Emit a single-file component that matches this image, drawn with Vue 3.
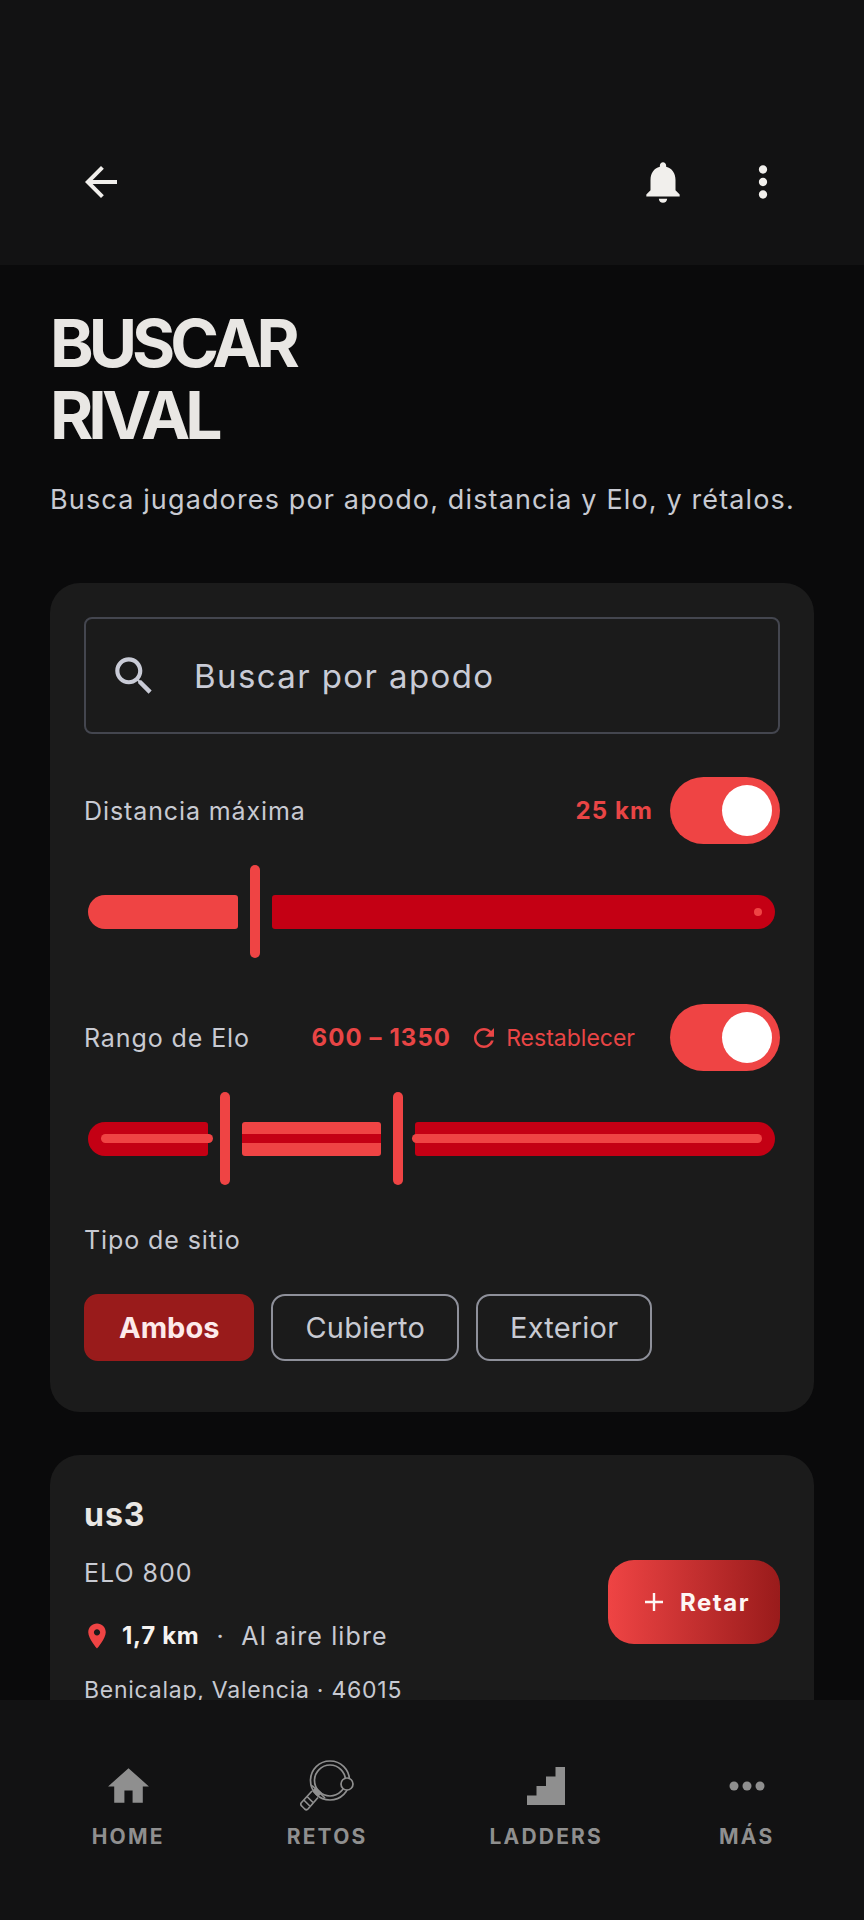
<template>
  <div class="page">
    <header class="topbar">
      <svg class="icon-back" viewBox="0 0 24 24"><path d="M20 11H7.83l5.59-5.59L12 4l-8 8 8 8 1.41-1.41L7.83 13H20v-2z" /></svg>
      <svg class="icon-bell" viewBox="0 0 24 24"><path d="M12 22c1.1 0 2-.9 2-2h-4c0 1.1.89 2 2 2zm6-6v-5c0-3.07-1.64-5.64-4.5-6.32V4c0-.83-.67-1.5-1.5-1.5s-1.5.67-1.5 1.5v.68C7.63 5.36 6 7.92 6 11v5l-2 2v1h16v-1l-2-2z" /></svg>
      <svg class="icon-more" viewBox="0 0 24 24"><path d="M12 8c1.1 0 2-.9 2-2s-.9-2-2-2-2 .9-2 2 .9 2 2 2zm0 2c-1.1 0-2 .9-2 2s.9 2 2 2 2-.9 2-2-.9-2-2-2zm0 6c-1.1 0-2 .9-2 2s.9 2 2 2 2-.9 2-2-.9-2-2-2z" /></svg>
    </header>

    <main class="content">
      <h1 class="title">BUSCAR<br />RIVAL</h1>
      <p class="subtitle">Busca jugadores por apodo, distancia y Elo, y rétalos.</p>

      <section class="card filters">
        <div class="search">
          <svg class="icon-search" viewBox="0 0 24 24"><path d="M15.5 14h-.79l-.28-.27C15.41 12.59 16 11.11 16 9.5 16 5.91 13.09 3 9.5 3S3 5.91 3 9.5 5.91 16 9.5 16c1.61 0 3.09-.59 4.23-1.57l.27.28v.79l5 4.99L20.49 19l-4.99-5zm-6 0C7.01 14 5 11.99 5 9.5S7.01 5 9.5 5 14 7.01 14 9.5 11.99 14 9.5 14z" /></svg>
          <span>Buscar por apodo</span>
        </div>

        <div class="filter-row first">
          <span class="label">Distancia máxima</span>
          <span class="value km">25 km</span>
          <div class="toggle"><div class="thumb"></div></div>
        </div>
        <div class="slider">
          <div class="seg on start" style="width: 150px"></div>
          <div class="handle"></div>
          <div class="seg off end grow"><span class="stop"></span></div>
        </div>

        <div class="filter-row">
          <span class="label">Rango de Elo</span>
          <span class="value elo">600 – 1350</span>
          <svg class="icon-refresh" viewBox="0 0 24 24"><path d="M17.65 6.35C16.2 4.9 14.21 4 12 4c-4.42 0-7.99 3.58-7.99 8s3.57 8 7.99 8c3.73 0 6.84-2.55 7.73-6h-2.08c-.82 2.33-3.04 4-5.65 4-3.31 0-6-2.69-6-6s2.69-6 6-6c1.66 0 3.14.69 4.22 1.78L13 11h7V4l-2.35 2.35z" /></svg>
          <span class="reset">Restablecer</span>
          <div class="toggle"><div class="thumb"></div></div>
        </div>
        <div class="slider">
          <div class="seg off start" style="width: 120px"><span class="line line-left"></span></div>
          <div class="handle"></div>
          <div class="seg on" style="width: 139px"><span class="line line-mid"></span></div>
          <div class="handle"></div>
          <div class="seg off end grow"><span class="line line-right"></span></div>
        </div>

        <div class="label site-label">Tipo de sitio</div>
        <div class="chips">
          <div v-for="chip in chips" :key="chip.name" :class="['chip', { active: chip.active }]">{{ chip.name }}</div>
        </div>
      </section>

      <section class="card player">
        <div class="player-info">
          <div class="player-name">us3</div>
          <div class="player-elo">ELO 800</div>
          <div class="player-place">
            <svg class="icon-pin" viewBox="0 0 24 24"><path d="M12 2C8.13 2 5 5.13 5 9c0 5.25 7 13 7 13s7-7.75 7-13c0-3.87-3.13-7-7-7zm0 9.5c-1.38 0-2.5-1.12-2.5-2.5s1.12-2.5 2.5-2.5 2.5 1.12 2.5 2.5-1.12 2.5-2.5 2.5z" /></svg>
            <strong>1,7 km</strong>
            <span class="dot">·</span>
            <span class="place-type">Al aire libre</span>
          </div>
          <div class="player-addr">Benicalap, Valencia · 46015</div>
        </div>
        <div class="challenge">
          <svg class="icon-plus" viewBox="0 0 20 20"><path d="M10 1v18M1 10h18" /></svg>
          <span>Retar</span>
        </div>
      </section>
    </main>

    <nav class="bottom-nav">
      <div class="nav-item">
        <div class="nav-icon">
          <svg width="49" height="49" viewBox="0 0 24 24"><path d="M10 20v-6h4v6h5v-8h3L12 3 2 12h3v8z" fill="#8f8f8f" /></svg>
        </div>
        <span>HOME</span>
      </div>
      <div class="nav-item">
        <div class="nav-icon">
          <svg width="54" height="52" viewBox="0 0 54 52" fill="none" stroke="#8f8f8f" stroke-width="1.7">
            <circle cx="30" cy="20.5" r="19.5" />
            <circle cx="30" cy="20.5" r="15.5" />
            <path d="M12 25.5L25 38" />
            <path d="M12 31l6 6 4-4-6-6z" fill="#8f8f8f" stroke="none" />
            <path d="M12 31L1.5 42.5a2.5 2.5 0 0 0 0.2 3.5l3 3a2.5 2.5 0 0 0 3.5 -0.2L18 37.5" />
            <path d="M7 36.5l6 6M3.8 40l6 6" />
            <circle cx="47" cy="24" r="6" fill="#121212" />
          </svg>
        </div>
        <span>RETOS</span>
      </div>
      <div class="nav-item">
        <div class="nav-icon">
          <svg width="38" height="38" viewBox="0 0 38 38"><path d="M0 38V28.5H9.5V19H19V9.5H28.5V0H38V38Z" fill="#8f8f8f" /></svg>
        </div>
        <span>LADDERS</span>
      </div>
      <div class="nav-item last">
        <div class="nav-icon">
          <svg width="36" height="10" viewBox="0 0 36 10" fill="#8f8f8f">
            <circle cx="5" cy="5" r="4.5" />
            <circle cx="18" cy="5" r="4.5" />
            <circle cx="31" cy="5" r="4.5" />
          </svg>
        </div>
        <span>MÁS</span>
      </div>
    </nav>
  </div>
</template>

<script setup>
const chips = [
  { name: 'Ambos', active: true },
  { name: 'Cubierto', active: false },
  { name: 'Exterior', active: false }
];
</script>

<style>
html,
body {
  margin: 0;
  background: #0a0a0a;
}
</style>

<style scoped>
.page {
  display: flex;
  flex-direction: column;
  height: 1920px;
  overflow: hidden;
  background: #0a0a0b;
  font-family: Inter, "Liberation Sans", sans-serif;
  color: #c8cad2;
}

/* barra superior */
.topbar {
  display: flex;
  align-items: center;
  flex-shrink: 0;
  box-sizing: border-box;
  height: 265px;
  padding: 157px 76px 58px 77px;
  background: #121213;
  fill: #f1efec;
}

.icon-back {
  width: 48px;
  height: 48px;
  margin-right: auto;
}

.icon-bell {
  width: 50px;
  height: 50px;
  margin-right: 50px;
}

.icon-more {
  width: 50px;
  height: 50px;
}

.content {
  flex: 1;
  min-height: 0;
  overflow: hidden;
  padding: 0 50px;
}

.title {
  margin: 42px 0 0;
  font-size: 66px;
  line-height: 72px;
  font-weight: 700;
  letter-spacing: -5px;
  color: #e9e7e4;
}

.subtitle {
  margin: 31px 0 0;
  font-size: 27px;
  line-height: 36px;
  letter-spacing: 1.14px;
  white-space: nowrap;
}

.card {
  box-sizing: border-box;
  width: 764px;
  background: #1b1b1b;
  border-radius: 30px;
}

.filters {
  margin-top: 65px;
  padding: 34px 34px 51px 34px;
}

.search {
  display: flex;
  align-items: center;
  gap: 35px;
  box-sizing: border-box;
  height: 117px;
  padding-left: 23px;
  border: 2px solid #44464f;
  border-radius: 8px;
  font-size: 33px;
  letter-spacing: 1.4px;
  color: #c9cbd6;
}

.icon-search {
  width: 50px;
  height: 50px;
  fill: #c9cbd6;
}

.filter-row {
  display: flex;
  align-items: center;
  margin-top: 46px;
}

.filter-row.first {
  margin-top: 43px;
}

.label {
  font-size: 25px;
  line-height: 30px;
  letter-spacing: 0.9px;
  color: #c8cad2;
}

.value {
  font-size: 24px;
  font-weight: 700;
  letter-spacing: 1.1px;
  color: #e94545;
}

.km {
  margin-left: auto;
  margin-right: 17px;
}

.elo {
  margin-left: auto;
  margin-right: 18px;
}

.icon-refresh {
  width: 30px;
  height: 30px;
  margin-right: 7px;
  fill: #e94545;
}

.reset {
  margin-right: 35px;
  font-size: 23px;
  color: #e94545;
}

.toggle {
  display: flex;
  align-items: center;
  justify-content: flex-end;
  flex-shrink: 0;
  box-sizing: border-box;
  width: 110px;
  height: 67px;
  padding-right: 8px;
  border-radius: 34px;
  background: #ef4444;
}

.thumb {
  width: 50px;
  height: 51px;
  border-radius: 50%;
  background: #fff;
}

/* sliders */
.slider {
  display: flex;
  align-items: center;
  height: 93px;
  margin: 21px 5px 0 4px;
}

.seg {
  position: relative;
  flex-shrink: 0;
  height: 34px;
  border-radius: 3px;
}

.seg.grow {
  flex: 1;
}

.seg.on {
  background: #ef4444;
}

.seg.off {
  background: #c40014;
}

.seg.start {
  border-radius: 17px 3px 3px 17px;
}

.seg.end {
  border-radius: 3px 17px 17px 3px;
}

.handle {
  flex-shrink: 0;
  width: 10px;
  height: 93px;
  margin: 0 12px;
  border-radius: 5px;
  background: #ef4444;
}

.stop {
  position: absolute;
  right: 13px;
  top: 13px;
  width: 8px;
  height: 8px;
  border-radius: 50%;
  background: #ef4444;
}

.line {
  position: absolute;
  top: 12px;
  height: 9px;
  border-radius: 5px;
  background: #ef4444;
}

.line-left {
  left: 13px;
  right: -5px;
}

.line-mid {
  left: 0;
  right: 0;
  border-radius: 0;
  background: #c40014;
}

.line-right {
  left: -3px;
  right: 13px;
}

.site-label {
  margin-top: 40px;
}

.chips {
  display: flex;
  gap: 17px;
  margin-top: 39px;
}

.chip {
  display: flex;
  align-items: center;
  justify-content: center;
  box-sizing: border-box;
  height: 67px;
  padding: 0 32px;
  border: 2px solid #8e909a;
  border-radius: 14px;
  font-size: 29px;
  letter-spacing: 0.2px;
  color: #c8cad2;
}

.chip.active {
  padding: 0 33px;
  border-color: #991b1b;
  background: #991b1b;
  font-weight: 700;
  letter-spacing: 0;
  color: #fdeaea;
}

/* tarjeta de jugador */
.player {
  display: flex;
  align-items: center;
  justify-content: space-between;
  height: 294px;
  margin-top: 43px;
  padding: 0 34px;
}

.player-info {
  align-self: flex-start;
  padding-top: 42px;
}

.player-name {
  font-size: 32px;
  line-height: 36px;
  font-weight: 700;
  letter-spacing: 1px;
  color: #e9e7e4;
}

.player-elo {
  margin-top: 25px;
  font-size: 25px;
  line-height: 30px;
  letter-spacing: 1px;
}

.player-place {
  display: flex;
  align-items: center;
  gap: 14px;
  margin-top: 32px;
  font-size: 25px;
  line-height: 32px;
  letter-spacing: 0.7px;
}

.player-place strong {
  margin-left: 3px;
  font-size: 24px;
  color: #f5f3f0;
}

.place-type {
  letter-spacing: 1.1px;
}

.dot {
  margin: 0 3px;
}

.icon-pin {
  width: 30px;
  height: 30px;
  margin-left: -2px;
  margin-right: -7px;
  fill: #ef4444;
}

.player-addr {
  margin-top: 23px;
  font-size: 23px;
  line-height: 30px;
  letter-spacing: 0.75px;
}

.challenge {
  display: flex;
  align-items: center;
  justify-content: center;
  gap: 16px;
  box-sizing: border-box;
  width: 172px;
  height: 84px;
  padding-left: 6px;
  border-radius: 26px;
  background: linear-gradient(90deg, #ef4444, #991b1b);
  font-size: 24px;
  font-weight: 700;
  letter-spacing: 1.5px;
  color: #fdf6f4;
}

.icon-plus {
  width: 20px;
  height: 20px;
  fill: none;
  stroke: #fdf6f4;
  stroke-width: 2.4;
}

/* navegación inferior */
.bottom-nav {
  display: flex;
  justify-content: center;
  gap: 122px;
  flex-shrink: 0;
  box-sizing: border-box;
  height: 220px;
  padding: 60px 0 0 2px;
  background: #121213;
  font-size: 21px;
  font-weight: 700;
  letter-spacing: 2.2px;
  color: #8f8f8f;
}

.nav-item {
  display: flex;
  flex-direction: column;
  align-items: center;
  gap: 12px;
}

.nav-item.last {
  margin-left: -6px;
}

.nav-icon {
  display: flex;
  align-items: center;
  justify-content: center;
  height: 52px;
}
</style>
